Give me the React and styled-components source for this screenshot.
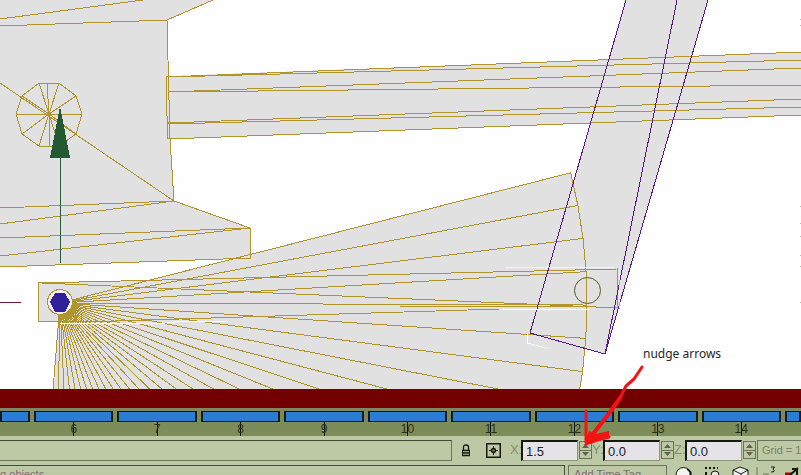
import React, { useId } from "react";
import styled, { createGlobalStyle } from "styled-components";

const GlobalStyle = createGlobalStyle`
  * { box-sizing: border-box; }
  body { margin: 0; background: #fefefe; overflow: hidden; font-family: "Liberation Sans", Arial, sans-serif; }
`;

const Page = styled.main`
  position: relative;
  display: flex;
  flex-direction: column;
  height: 100vh;
  overflow: hidden;
`;

const Viewport = styled.section`
  flex: 1 1 0;
  min-height: 0;
  background: #fefefe;
`;

const Drawing = styled.svg`
  display: block;
  width: 100%;
  height: 100%;
`;

const ActiveBand = styled.div`
  flex: none;
  height: 19px;
  background: #730000;
`;

const Timeline = styled.section`
  flex: none;
  background: #7e8f5e;
`;

const TrackGrid = styled.div`
  display: grid;
  grid-template-columns: 30px repeat(9, minmax(0, 1fr)) 16px;
  column-gap: 4px;
`;

const Track = styled(TrackGrid)`
  height: 14px;
  padding: 3px 0 0;
  background: #80875f;
`;

const Block = styled.div`
  background: #2b7cd3;
  border: solid #101c18;
  border-width: 1px 2px;
`;

const Ruler = styled(TrackGrid)`
  height: 14px;
  background: #7d8d59;
`;

const Mark = styled.div`
  display: flex;
  justify-content: center;
  grid-column-start: ${(p) => p.$column};
  background: linear-gradient(#0c120c, #0c120c) center / 1px 100% no-repeat;
  color: #28301c;
  font-size: 12px;
  line-height: 14px;
`;

const Panel = styled.section`
  flex: none;
  height: 39px;
  overflow: hidden;
  background: #bdc9a5;
  padding-top: 4px;
`;

const ControlRow = styled.div`
  display: flex;
  align-items: stretch;
  height: 21px;
`;

const StatusFrame = styled.div`
  flex: 1 1 0;
  border: 1px solid #6d775b;
  border-left: 0;
  border-top-color: #434b38;
  margin-right: 4px;
`;

const IconButton = styled.button`
  display: flex;
  align-items: center;
  justify-content: center;
  width: ${(p) => p.$width}px;
  padding: 0;
  border: 0;
  background: none;
`;

const Field = styled.div`
  display: flex;
  align-items: stretch;
`;

const AxisLabel = styled.label`
  width: 11px;
  color: #858e74;
  font-size: 13px;
  line-height: 20px;
  white-space: nowrap;
`;

const NumberInput = styled.input`
  width: 57px;
  padding: 0 0 0 3px;
  border: solid #15180f;
  border-width: 2px 1px 1px 2px;
  border-right-color: #8c957c;
  border-bottom-color: #8c957c;
  border-radius: 0;
  background: #e5e3e8;
  color: #20211f;
  font: 13px "Liberation Sans", Arial, sans-serif;
`;

const Spinner = styled.div`
  display: flex;
  flex-direction: column;
  width: 13px;
  margin: 1px 0 2px 1px;
  border: 1px solid #69725a;
`;

const SpinButton = styled.button`
  display: flex;
  flex: 1;
  align-items: center;
  justify-content: center;
  padding: 0;
  border: 0;
  background: #bdc9a5;
  & + & { border-top: 1px solid #69725a; }
`;

const GridFrame = styled.div`
  width: 44px;
  margin-left: 1px;
  padding-left: 4px;
  border: 1px solid #69725a;
  border-right: 0;
  color: #79806c;
  font-size: 11px;
  line-height: 19px;
  white-space: nowrap;
`;

const PromptRow = styled.div`
  display: flex;
  height: 20px;
  margin-top: 4px;
  gap: 3px;
`;

const Prompt = styled.div`
  flex: 1 1 0;
  border: solid #454c39;
  border-width: 1px 1px 0 0;
  color: #806e70;
  font-size: 11px;
  line-height: 17px;
  text-indent: -6px;
  white-space: nowrap;
`;

const TimeTag = styled.button`
  display: flex;
  align-items: flex-start;
  width: 99px;
  padding: 0 0 0 5px;
  border: 1px solid #69725a;
  background: #bdc9a5;
  color: #806e70;
  font: 11px/17px "Liberation Sans", Arial, sans-serif;
`;

const ToolIcons = styled.div`
  width: 131px;
  svg { display: block; }
`;

const Annotation = styled.div`
  position: absolute;
  inset: 0;
  pointer-events: none;
`;

const Note = styled.p`
  position: absolute;
  left: 643px;
  top: 345px;
  margin: 0;
  color: #262626;
  font: 12px/18px "Noto Sans", sans-serif;
  white-space: nowrap;
`;

const HUB = { x: 60, y: 303 };
const RAY_COUNT = 31;
const polar = (radius, index) => {
  const angle = ((-14.3 + index * 3.63) * Math.PI) / 180;
  return [HUB.x + radius * Math.cos(angle), HUB.y + radius * Math.sin(angle)];
};
const RAYS = Array.from({ length: RAY_COUNT }, (_, i) => [polar(6, i), polar(527, i)]);
const RIM = RAYS.map(([, end]) => end.join(",")).join(" ");
const WHEEL_RIM = [[39, 83], [59, 83], [76, 96], [82, 114], [76, 134], [59, 146], [39, 146], [22, 134], [16, 114], [22, 96]];

function Scene() {
  return (
    <Drawing viewBox="0 0 801 389" preserveAspectRatio="xMinYMin slice" role="img" aria-label="Wireframe model" shapeRendering="crispEdges">
      <g fill="#e1e1e1">
        <polygon points="0,0 213,0 167,20 168,76 801,52 801,115 170,139 174,201 250,228 250,258 0,267" />
        <polygon points={`${HUB.x},${HUB.y} ${RIM}`} />
        <polygon points="38,283 617,269 618,308 38,321" />
        <polygon points="626,0 708,0 605,354 530,333" />
      </g>
      <g fill="none" stroke="#b0952c" strokeWidth="1">
        <path d="M0 19 143 0M0 26 167 20 213 0M167 20 170 139 174 201M0 83 174 201M0 208 174 201M0 224 174 201 250 228M0 238 250 228 251 258 0 267M0 256 250 228" />
        <path d="M166 77 801 52M166 77V92L168 139 801 115M168 77 801 60M168 92 801 68M168 92 801 85M168 123 801 99M168 124 801 107" />
        {RAYS.map(([a, b], i) => <line key={i} x1={a[0]} y1={a[1]} x2={b[0]} y2={b[1]} />)}
        <polyline points={RIM} />
        <path d="M38 283 617 269V304L619 308 42 283M38 283V321H115L500 309M400 306 586 307" />
        <polygon points={WHEEL_RIM.map((p) => p.join(",")).join(" ")} />
        {WHEEL_RIM.map((p, i) => <line key={i} x1="49" y1="114" x2={p[0]} y2={p[1]} />)}
        <path d="M47 83 49 114V146" />
        <circle cx="60" cy="302" r="12.5" fill="#f0f0f0" />
      </g>
      <circle cx="587.5" cy="290.5" r="13" fill="none" stroke="#5d561f" shapeRendering="auto" />
      <path d="M626 0 530 333 605 354 708 0M677 0 605 354" fill="none" stroke="#581a80" />
      <path d="M60 323H165L185 321H226M500 310 590 309M527 334V343L549 349" fill="none" stroke="#fff" />
      <path d="M505 268 617 267M619 270V306" fill="none" stroke="#fff" strokeOpacity="0.6" />
      <path d="M0 302H21" stroke="#73182b" />
      <path d="M60 158V263" stroke="#28593a" />
      <path d="M60 106 70 158H50Z" fill="#235a32" />
      <path d="M55 293H65L70 302 65 312H55L50 302Z" fill="#31209a" />
      <path d="M800 19V27M800 206V209M800 223V226M800 236V239M800 255V258M800 266V269M800 302V305" stroke="#c4b8a5" strokeDasharray="1 5" />
    </Drawing>
  );
}

function CoordinateField({ axis, value }) {
  const id = useId();
  return (
    <Field>
      <AxisLabel htmlFor={id}>{axis}:</AxisLabel>
      <NumberInput id={id} defaultValue={value} />
      <Spinner>
        <SpinButton aria-label={`Increase ${axis}`}>
          <svg width="7" height="4" viewBox="0 0 7 4"><path d="M0 4 3.5 0 7 4Z" fill="#655f52" /></svg>
        </SpinButton>
        <SpinButton aria-label={`Decrease ${axis}`}>
          <svg width="7" height="4" viewBox="0 0 7 4"><path d="M0 0 3.5 4 7 0Z" fill="#655f52" /></svg>
        </SpinButton>
      </Spinner>
    </Field>
  );
}

export default function App() {
  return (
    <Page>
      <GlobalStyle />
      <Viewport><Scene /></Viewport>
      <ActiveBand />
      <Timeline aria-label="Time slider">
        <Track>{Array.from({ length: 11 }, (_, i) => <Block key={i} />)}</Track>
        <Ruler>{[6, 7, 8, 9, 10, 11, 12, 13, 14].map((n, i) => <Mark key={n} $column={i + 2}>{n}</Mark>)}</Ruler>
      </Timeline>
      <Panel>
        <ControlRow>
          <StatusFrame />
          <IconButton $width={20} aria-label="Lock selection">
            <svg width="8" height="13" viewBox="0 0 8 13" fill="none" stroke="#15190f">
              <path d="M1.5 6V3Q1.5 1 4 1T6.5 3V6" strokeWidth="1.3" />
              <path d="M0 6.5H8M0 9H8M0 11.5H8" strokeWidth="1.5" /><path d="M.5 6V12M7.5 6V12" />
            </svg>
          </IconButton>
          <IconButton $width={34} aria-label="Absolute coordinates">
            <svg width="15" height="15" viewBox="0 0 15 15" fill="none" stroke="#15190f">
              <path d="M.75.75H14.25V14.25H.75Z" strokeWidth="1.5" /><path d="M7.5 3V12M3 7.5H12" /><circle cx="7.5" cy="7.5" r="2" fill="#6c755b" strokeWidth="1.3" />
            </svg>
          </IconButton>
          <CoordinateField axis="X" value="1.5" />
          <CoordinateField axis="Y" value="0.0" />
          <CoordinateField axis="Z" value="0.0" />
          <GridFrame>Grid = 1</GridFrame>
        </ControlRow>
        <PromptRow>
          <Prompt>ng objects</Prompt>
          <TimeTag>Add Time Tag</TimeTag>
          <ToolIcons>
            <svg width="131" height="10" viewBox="670 465 131 10" fill="none" stroke="#15190f" aria-hidden="true">
              <circle cx="683.5" cy="475" r="7.5" fill="#f4f4f1" />
              <path d="M687 469Q692 472 690 475" strokeWidth="2" />
              <path d="M705 468H718" strokeWidth="2" strokeDasharray="2 2" />
              <path d="M706 472V475" strokeWidth="2" />
              <circle cx="715" cy="475" r="4" fill="#e4e4e0" />
              <path d="M733 470 740 467 748 470V476H733Z" fill="#eee" />
              <path d="M733 470 741 474 748 470M741 474V476" />
              <path d="M757 467V475" stroke="#69725a" />
              <path d="M763 474H769" stroke="#69725a" /><path d="M771 467H774.5L773 469Q776 472 771 472" />
              <path d="M785 474H792" stroke="#a00" strokeWidth="3" /><path d="M790 475 798 468M792 469H797V475" strokeWidth="2" />
            </svg>
          </ToolIcons>
        </PromptRow>
      </Panel>
      <Annotation>
        <Note>nudge arrows</Note>
        <Drawing viewBox="0 0 801 475" preserveAspectRatio="xMinYMax slice" aria-hidden="true">
          <path d="M642 367 634 379 626 386 620 398 613 408 604 420 593 434M586 411V442M588 442 609 437" fill="none" stroke="#f41313" strokeWidth="3" strokeLinecap="round" strokeLinejoin="round" />
          <path d="M620 398 613 408 604 420 593 434" fill="none" stroke="#f41313" strokeWidth="4" strokeLinecap="round" strokeLinejoin="round" />
          <path d="M584 446 589 431 596 434 609 431V438Z" fill="#f41313" />
        </Drawing>
      </Annotation>
    </Page>
  );
}
